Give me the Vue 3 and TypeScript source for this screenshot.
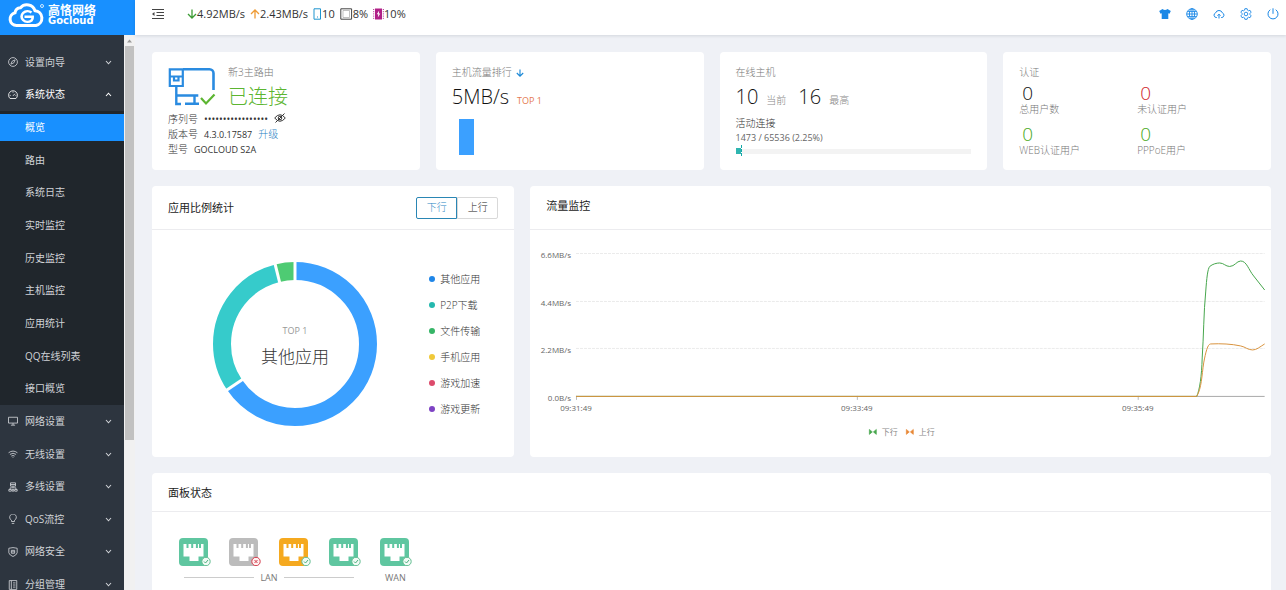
<script setup lang="ts">
import { ref } from 'vue'

interface MenuGroup {
  label: string
  icon: string
  open?: boolean
  children?: string[]
}

const groups: MenuGroup[] = [
  { label: '设置向导', icon: 'compass' },
  {
    label: '系统状态',
    icon: 'gauge',
    open: true,
    children: ['概览', '路由', '系统日志', '实时监控', '历史监控', '主机监控', '应用统计', 'QQ在线列表', '接口概览'],
  },
  { label: '网络设置', icon: 'monitor' },
  { label: '无线设置', icon: 'wifi' },
  { label: '多线设置', icon: 'lines' },
  { label: 'QoS流控', icon: 'bulb' },
  { label: '网络安全', icon: 'shield' },
  { label: '分组管理', icon: 'book' },
]

const active = ref('概览')
const direction = ref<'down' | 'up'>('down')

const auth = [
  { value: 0, label: '总用户数', tone: 'dark' },
  { value: 0, label: '未认证用户', tone: 'red' },
  { value: 0, label: 'WEB认证用户', tone: 'green' },
  { value: 0, label: 'PPPoE用户', tone: 'green' },
]

const legend = [
  { label: '其他应用', color: '#1f86e8' },
  { label: 'P2P下载', color: '#25b8ae' },
  { label: '文件传输', color: '#36b567' },
  { label: '手机应用', color: '#f0c93a' },
  { label: '游戏加速', color: '#dc4b6c' },
  { label: '游戏更新', color: '#7e43c4' },
]

const slices = [
  { start: 0, size: 236, color: '#3ba0ff' },
  { start: 236, size: 110, color: '#36cbcb' },
  { start: 346, size: 14, color: '#4ecb73' },
]

const yTicks = [
  { label: '6.6MB/s', y: 23 },
  { label: '4.4MB/s', y: 71 },
  { label: '2.2MB/s', y: 118 },
  { label: '0.0B/s', y: 166 },
]

const xTicks = [
  { label: '09:31:49', x: 47 },
  { label: '09:33:49', x: 328 },
  { label: '09:35:49', x: 609 },
]

const lan = [
  { color: '#5fc6a0', up: true },
  { color: '#bcbcbc', up: false },
  { color: '#f5a91f', up: true },
  { color: '#5fc6a0', up: true },
]
const portGroups = [
  { name: 'LAN', ports: lan, ruled: true },
  { name: 'WAN', ports: [{ color: '#5fc6a0', up: true }], ruled: false },
]

const connectionPercent = 2.25
</script>

<template>
  <div class="app">
    <aside class="side">
      <a class="brand" href="#" aria-label="高恪网络 Gocloud">
        <svg class="brand-mark" viewBox="0 0 38 26" width="38" height="26" fill="none" stroke="#fff">
          <path stroke-width="3" d="M10 23.5H8.500a6.500 6.500 0 0 1-1.500-12.800a6 6 0 0 1 5.500-5a8.500 8.500 0 0 1 14.500 3a7.500 7.500 0 0 1 1 14.800Z" />
          <path stroke-width="2.600" d="M23.500 10.500a6 5.300 0 1 0 0 8c1-1 1.300-2.500 1.200-3.700H16.500" />
          <circle cx="34" cy="4" r="1.500" stroke-width=".8" />
        </svg>
        <span class="brand-text"><b>高恪网络</b><b class="brand-en">Gocloud</b></span>
      </a>
      <div class="side-body">
        <nav class="menu">
          <template v-for="g in groups" :key="g.label">
            <button type="button" class="menu-head" :class="{ open: g.open }" :aria-expanded="!!g.open">
              <svg class="menu-icon" viewBox="0 0 12 12" width="10" height="10" fill="none" stroke="currentColor">
                <template v-if="g.icon === 'compass'">
                  <circle cx="6" cy="6" r="5.300" /><path d="M8.600 3.400L7 7L3.400 8.600L5 5Z" />
                </template>
                <template v-else-if="g.icon === 'gauge'">
                  <path d="M2.500 10.200a5.300 5.300 0 1 1 7 0Z" /><path d="M6 7l2.300-2.500M6 2v1.200M2 6.500h1.200M9 6.500h1" />
                </template>
                <template v-else-if="g.icon === 'monitor'">
                  <path d="M.6 1.500h10.800v7H.6ZM6 8.500v2.300M3.500 11h5" />
                </template>
                <template v-else-if="g.icon === 'wifi'">
                  <path d="M.7 4.500q5.300-4 10.600 0M2.300 6.500q3.700-2.800 7.400 0M4 8.500q2-1.500 4 0M5.500 10h1" />
                </template>
                <template v-else-if="g.icon === 'lines'">
                  <path d="M3 1h6v4H3ZM3 3h6M6 5v2M2.500 9V7h7v2M1 9h3v2H1ZM5 9h2v2H5ZM8 9h3v2H8Z" />
                </template>
                <template v-else-if="g.icon === 'bulb'">
                  <path d="M4.200 9V7.500a4 4 0 1 1 3.600 0V9ZM4.500 11.300h3" />
                </template>
                <template v-else-if="g.icon === 'shield'">
                  <path d="M1 1.500L6 .7l5 .8v5.500Q10 10 6 11.400Q2 10 1 7Z" /><path d="M4 4h4v3.500H4ZM4 5.800h4" />
                </template>
                <template v-else>
                  <path d="M1.500.7h9v10.600h-9ZM4 .7v10.600M6 3.500h3M6 6h3M6 8.500h3" />
                </template>
              </svg>
              <span>{{ g.label }}</span>
              <svg class="chev" viewBox="0 0 8 6" width="7" height="5" fill="none" stroke="currentColor" stroke-width="1.300">
                <path :d="g.open ? 'M1 4.800L4 1.500L7 4.800' : 'M1 1.200L4 4.500L7 1.200'" />
              </svg>
            </button>
            <ul v-if="g.children" class="sub">
              <li v-for="c in g.children" :key="c">
                <a href="#" :class="{ active: active === c }" @click.prevent="active = c">{{ c }}</a>
              </li>
            </ul>
          </template>
        </nav>
        <div class="scroll" aria-hidden="true">
          <svg viewBox="0 0 11 11" width="11" height="11"><path d="M3 7.500L5.500 4.500L8 7.500Z" fill="#999" /></svg>
          <div class="thumb"></div>
        </div>
      </div>
    </aside>

    <div class="main">
      <header class="top">
        <button type="button" class="icon-btn fold" aria-label="收起菜单">
          <svg viewBox="0 0 14 12" width="14" height="12" fill="none" stroke="#444">
            <path d="M1 1.500h12M5.500 4.500H13M5.500 7.500H13M1 10.500h12" /><path d="M3.500 4L1 6l2.500 2Z" fill="#444" stroke="none" />
          </svg>
        </button>
        <ul class="stats">
          <li>
            <svg viewBox="0 0 10 10" width="10" height="10" fill="none" stroke="#3d9c35" stroke-width="1.300"><path d="M5 .5v8.500M1 5l4 4l4-4" /></svg>4.92MB/s
          </li>
          <li>
            <svg viewBox="0 0 10 10" width="10" height="10" fill="none" stroke="#ee9b35" stroke-width="1.300"><path d="M5 9.500V1M1 5l4-4l4 4" /></svg>2.43MB/s
          </li>
          <li>
            <svg viewBox="0 0 9 12" width="9" height="12" fill="none" stroke="#1e95cf"><path d="M1 .8h6.500v10.400H1Z" /><path d="M4 9h1" /></svg>10
          </li>
          <li>
            <svg viewBox="0 0 13 12" width="13" height="12" fill="none" stroke="#444"><path d="M.8.8h10.800v10.400H.8Z" /><path d="M3 2.500h6.500v7H3Z" stroke="#999" stroke-width=".6" /></svg>8%
          </li>
          <li>
            <svg viewBox="0 0 11 12" width="11" height="12" fill="none"><path d="M2 .5h7v11H2Z" fill="#b01f87" /><path d="M.7 1v10M10.300 1v10" stroke="#b01f87" stroke-dasharray="1 1.200" /><path d="M6.200 2.500L3.800 6.300h1.500L4.800 9.500L7.300 5.600H5.800Z" fill="#fff" /></svg>10%
          </li>
        </ul>
        <div class="tools">
          <button type="button" class="icon-btn" aria-label="主题">
            <svg viewBox="0 0 12 12" width="12" height="12"><path d="M3.500 1Q6 3 8.500 1L11.800 3L10.500 5.800L9.300 5.300V11H2.700V5.300L1.500 5.800L.2 3Z" fill="#1b88e6" /></svg>
          </button>
          <button type="button" class="icon-btn" aria-label="语言">
            <svg viewBox="0 0 12 12" width="12" height="12" fill="none" stroke="#1b88e6" stroke-width=".9"><circle cx="6" cy="6" r="5.300" /><ellipse cx="6" cy="6" rx="2.600" ry="5.300" /><path d="M6 .7v10.600M.7 6h10.600M1.500 3.400h9M1.500 8.600h9" /></svg>
          </button>
          <button type="button" class="icon-btn" aria-label="云升级">
            <svg viewBox="0 0 12 12" width="12" height="12" fill="none" stroke="#1b88e6"><path d="M3.800 9.500H3A2.400 2.400 0 0 1 2.600 4.900a3.600 3.600 0 0 1 6.800 0A2.400 2.400 0 0 1 9 9.500h-.8M6 10.500V6.300M4.500 7.700L6 6.200l1.500 1.500" /></svg>
          </button>
          <button type="button" class="icon-btn" aria-label="设置">
            <svg viewBox="0 0 12 12" width="12" height="12" fill="none" stroke="#1b88e6" stroke-width=".9"><path d="M4.900.7h2.200l.4 1.500l1 .6l1.500-.5l1.100 1.900l-1.100 1.100v1.400l1.100 1.100L10 9.700l-1.500-.5l-1 .6l-.4 1.500H4.900l-.4-1.500l-1-.6l-1.500.5L.9 7.800L2 6.700V5.300L.9 4.200L2 2.300l1.500.5l1-.6Z" /><circle cx="6" cy="6" r="1.800" /></svg>
          </button>
          <button type="button" class="icon-btn" aria-label="退出">
            <svg viewBox="0 0 12 12" width="12" height="12" fill="none" stroke="#1b88e6"><path d="M6 .3v5.500M3.300 1.700a5 5 0 1 0 5.400 0" /></svg>
          </button>
        </div>
      </header>

      <main class="content">
        <section class="row four">
          <article class="card tile">
            <div class="host">
              <svg viewBox="0 0 48 40" width="48" height="40" fill="none" stroke="#2a8be0" stroke-width="2.600">
                <path d="M15 2.300h26.500a4 4 0 0 1 4 4V23" />
                <path d="M1.800 2.300H14.800V19H1.800ZM1.800 9.500h13M6 9.500v4h4.500v-4" stroke-width="2.200" />
                <path d="M8.300 19v18H13M8.300 28.500h22M17 36.800h14M26.500 28.500v8" stroke-width="2.400" />
                <path d="M33 31l5 5.500L46.500 27.500" stroke="#5cb531" stroke-width="2.200" />
              </svg>
              <div>
                <p class="muted">新3主路由</p>
                <p class="state">已连接</p>
              </div>
            </div>
            <dl class="info">
              <div>
                <dt>序列号</dt><dd class="dots">•••••••••••••••••</dd>
                <dd>
                  <button type="button" class="icon-btn" aria-label="显示序列号">
                    <svg viewBox="0 0 12 10" width="12" height="10" fill="none" stroke="#333"><path d="M.7 5Q6-1.500 11.300 5Q6 11.500.7 5ZM10.500.5l-9 9" /><circle cx="6" cy="5" r="1.800" /></svg>
                  </button>
                </dd>
              </div>
              <div><dt>版本号</dt><dd class="num">4.3.0.17587</dd><dd><a href="#" class="link">升级</a></dd></div>
              <div><dt>型号</dt><dd class="num model">GOCLOUD S2A</dd></div>
            </dl>
          </article>

          <article class="card tile">
            <h2 class="muted">主机流量排行
              <svg viewBox="0 0 10 10" width="8" height="8" fill="none" stroke="#1b88d6" stroke-width="1.400"><path d="M5 .5v8.500M1 5l4 4l4-4" /></svg>
            </h2>
            <p class="figures"><strong>5MB/s</strong><span class="top1">TOP 1</span></p>
            <div class="rank-bar"></div>
          </article>

          <article class="card tile">
            <h2 class="muted">在线主机</h2>
            <p class="figures"><strong>10</strong><span>当前</span><strong>16</strong><span>最高</span></p>
            <p class="conn">活动连接</p>
            <p class="num conn-num">1473 / 65536 (2.25%)</p>
            <div class="meter" role="progressbar" :aria-valuenow="connectionPercent">
              <div class="meter-fill" :style="{ width: connectionPercent + '%' }"></div>
              <div class="meter-mark"></div>
            </div>
          </article>

          <article class="card tile">
            <h2 class="muted">认证</h2>
            <ul class="auth">
              <li v-for="a in auth" :key="a.label">
                <strong :class="a.tone">{{ a.value }}</strong><span>{{ a.label }}</span>
              </li>
            </ul>
          </article>
        </section>

        <section class="row three">
          <article class="card">
            <header class="card-head">
              <h2>应用比例统计</h2>
              <div class="segment" role="group" aria-label="方向">
                <button type="button" :class="{ on: direction === 'down' }" @click="direction = 'down'">下行</button>
                <button type="button" :class="{ on: direction === 'up' }" @click="direction = 'up'">上行</button>
              </div>
            </header>
            <div class="share">
              <svg class="donut" viewBox="0 0 166 166" width="166" height="166">
                <g transform="rotate(-90 83 83)" fill="none" stroke-width="18">
                  <circle
                    v-for="s in slices" :key="s.start" cx="83" cy="83" r="73" :stroke="s.color" pathLength="360"
                    :stroke-dasharray="`${s.size} ${360 - s.size}`" :stroke-dashoffset="-s.start"
                  />
                </g>
                <path
                  v-for="s in slices" :key="'gap' + s.start" d="M83 0v21" stroke="#fff" stroke-width="3"
                  :transform="`rotate(${s.start} 83 83)`"
                />
                <text x="83" y="73" class="donut-small">TOP 1</text>
                <text x="83" y="102" class="donut-big">其他应用</text>
              </svg>
              <ul class="legend">
                <li v-for="l in legend" :key="l.label">
                  <svg viewBox="0 0 6 6" width="6" height="6"><circle cx="3" cy="3" r="3" :fill="l.color" /></svg>{{ l.label }}
                </li>
              </ul>
            </div>
          </article>

          <article class="card wide">
            <header class="card-head traffic"><h2>流量监控</h2></header>
            <svg class="chart" viewBox="1 0 741 226" role="img" aria-label="流量监控">
              <g v-for="t in yTicks" :key="t.label">
                <path v-if="t.y < 160" :d="`M47 ${t.y}.500H736`" stroke="#ebebeb" stroke-dasharray="3 1" />
                <text x="42" :y="t.y + 5" text-anchor="end">{{ t.label }}</text>
              </g>
              <path d="M47 166.500H736" stroke="#aaa" />
              <g v-for="t in xTicks" :key="t.label">
                <path :d="`M${t.x}.500 166v4`" stroke="#bbb" />
                <text :x="t.x" y="181" text-anchor="middle">{{ t.label }}</text>
              </g>
              <g fill="none">
                <path stroke="#46a64c" d="M47 166.500H668C671 160 673 146 673.500 128C675 106 675 82 677 62C678 48 679 39 681 36.500C684 34 688 33 691 33C695 33 697 36.500 701 36.500C706 36.500 708 31 712 31C718 31 720 40 725 46L736 60" />
                <path stroke="#d9943f" d="M47 166.500H668C673 158 673 146 675 133C677 122 679 114 682 114C692 113.500 703 114 712 116C717 117 719 120 724 120C728 120 731 117 736 114" />
              </g>
              <path d="M340.500 199.500v5l3-2.500ZM347.500 199.500v5l-3-2.500Z" fill="#46a64c" stroke="#46a64c" stroke-width=".6" />
              <text x="353" y="205" class="key">下行</text>
              <path d="M377.500 199.500v5l3-2.500ZM384.500 199.500v5l-3-2.500Z" fill="#e88836" stroke="#e88836" stroke-width=".6" />
              <text x="390" y="205" class="key">上行</text>
            </svg>
          </article>
        </section>

        <section class="card panel">
          <header class="card-head"><h2>面板状态</h2></header>
          <div class="port-groups">
            <div v-for="g in portGroups" :key="g.name">
              <div class="ports">
                <svg v-for="(p, i) in g.ports" :key="i" viewBox="0 0 32 28" width="32" height="28">
                  <rect width="29" height="28" rx="4" :fill="p.color" />
                  <path d="M4.500 6h3v4H9.500V6h2.700v4h2V6h2.700v4h2V6h2.100v4h0V6h3.500v12.500h-5v4.500H10.500v-4.500h-6Z" fill="#fff" />
                  <path d="M20 5v5h2V5Z" :fill="p.color" />
                  <circle cx="27" cy="23.500" r="4.200" :fill="p.up ? '#f1fbf5' : '#fff0f0'" :stroke="p.up ? '#62bd91' : '#d43c4c'" />
                  <path fill="none" :stroke="p.up ? '#4cae7e' : '#d43c4c'" :d="p.up ? 'M25 23.500l1.500 1.500l2.500-3' : 'M25.500 22l3 3M28.500 22l-3 3'" />
                </svg>
              </div>
              <div class="port-name" :class="{ ruled: g.ruled }">{{ g.name }}</div>
            </div>
          </div>
        </section>
      </main>
    </div>
  </div>
</template>

<style>
body {
  background: #eff1f6;
}
</style>

<style scoped>
.app {
  display: flex;
  height: 100vh;
  overflow: hidden;
  font-family: "Open Sans", "Noto Sans CJK SC", sans-serif;
  font-size: 10px;
  font-weight: 300;
  line-height: 15px;
  color: #333;
}
* {
  box-sizing: border-box;
}
h2, p, ul, dl, dd {
  margin: 0;
  padding: 0;
  font-size: inherit;
  font-weight: inherit;
}
ul {
  list-style: none;
}
a {
  text-decoration: none;
}
svg {
  display: block;
  flex: none;
}
button {
  padding: 0;
  border: 0;
  background: none;
  font: inherit;
  color: inherit;
  cursor: pointer;
}

/* sidebar */
.side {
  display: flex;
  flex-direction: column;
  flex: none;
  width: 135px;
}
.brand {
  display: flex;
  flex: none;
  gap: 2px;
  height: 35px;
  padding: 2px 8px;
  background: #1890ff;
  color: #fff;
}
.brand-text {
  display: flex;
  flex-direction: column;
  font-family: "Noto Sans CJK SC", sans-serif;
  font-size: 12px;
  line-height: 13px;
  padding-top: 1px;
}
.brand-text b {
  font-weight: 700;
}
.brand-text .brand-en {
  font-family: "DejaVu Sans", sans-serif;
  font-size: 10px;
  line-height: 10px;
}
.side-body {
  display: flex;
  flex: 1;
  min-height: 0;
  overflow: hidden;
}
.menu {
  display: flex;
  flex-direction: column;
  flex: 1;
  height: 566px;
  padding-top: 11px;
  background: #2d353f;
  color: #d0d3d7;
  font-weight: 400;
}
.menu-head {
  display: flex;
  flex: 1 1 0;
  align-items: center;
  gap: 7px;
  padding: 0 12px 0 8px;
}
.menu-head.open {
  color: #fff;
}
.chev {
  margin-left: auto;
}
.sub {
  display: grid;
  grid-auto-rows: 1fr;
  flex: 9 1 0;
  background: #20262c;
}
.sub li {
  display: flex;
  align-items: center;
}
.sub a {
  flex: 1;
  padding-left: 25px;
  line-height: 27px;
  color: #d0d3d7;
}
.sub a.active {
  background: #1890ff;
  color: #fff;
}
.scroll {
  width: 11px;
  background: #f1f1f1;
}
.thumb {
  width: 9px;
  height: 71%;
  margin-left: 1px;
  background: #c1c1c1;
}

/* top bar */
.main {
  flex: 1;
  min-width: 0;
}
.top {
  display: flex;
  align-items: center;
  height: 35px;
  padding: 0 7px 7px 16px;
  background: #fff;
  box-shadow: 0 1px 3px #0015291f;
}
.stats {
  display: flex;
  gap: 5px;
  margin-left: 22px;
  font-size: 11px;
  font-weight: 400;
  line-height: 16px;
}
.stats li {
  display: flex;
  align-items: center;
}
.tools {
  display: flex;
  gap: 15px;
  margin-left: auto;
}

/* content */
.content {
  display: flex;
  flex-direction: column;
  gap: 16px;
  padding: 17px 15px 0 17px;
}
.row {
  display: grid;
  gap: 16px;
}
.four {
  grid-template-columns: repeat(4, 1fr);
}
.three {
  grid-template-columns: repeat(3, 1fr);
}
.wide {
  grid-column: span 2;
}
.card {
  min-width: 0;
  border-radius: 4px;
  background: #fff;
}
.tile {
  min-height: 118px;
  padding: 13px 16px 8px;
}
.muted {
  color: #777;
}
h2.muted {
  display: flex;
  align-items: center;
  gap: 4px;
}
.host {
  display: flex;
  gap: 12px;
  height: 47px;
}
.host svg {
  margin-top: 2px;
}
.state {
  font-size: 20px;
  line-height: 33px;
  color: #5cb531;
}
.info div {
  display: flex;
  align-items: center;
  gap: 6px;
}
.num {
  font-size: 9px;
  font-weight: 400;
}
.dots {
  font-weight: 400;
}
.link {
  color: #1f7fc4;
}
.figures {
  display: flex;
  align-items: baseline;
  gap: 8px;
  height: 36px;
  line-height: 34px;
  color: #888;
}
.figures strong {
  font-size: 20px;
  font-weight: 300;
  color: #111;
}
.figures span + strong {
  margin-left: 4px;
}
.figures .top1 {
  font-size: 9px;
  font-weight: 400;
  color: #e57a52;
}
.rank-bar {
  width: 15px;
  height: 36px;
  margin: 3px 0 0 7px;
  background: #3ba0ff;
}
.conn-num {
  line-height: 14px;
  color: #666;
}
.meter {
  display: flex;
  align-items: center;
  height: 12px;
  background: linear-gradient(#f3f3f3, #f3f3f3) center / 100% 5px no-repeat;
}
.meter-fill {
  height: 6px;
  background: #2fb5b0;
}
.meter-mark {
  width: 1px;
  height: 12px;
  background: repeating-linear-gradient(#13a8a8 0 3px, #fff 3px 4px);
}
.auth {
  display: grid;
  grid-template-columns: 1fr 1fr;
  color: #777;
}
.auth li {
  display: flex;
  flex-direction: column;
  height: 41px;
  padding-top: 4px;
}
.auth strong {
  padding-left: 3px;
  font-size: 19px;
  font-weight: 300;
  line-height: 18px;
}
.dark { color: #111; }
.red { color: #d0242c; }
.green { color: #49a81c; }

.card-head {
  display: flex;
  align-items: center;
  justify-content: space-between;
  min-height: 44px;
  padding: 0 16px;
  border-bottom: 1px solid #ececef;
  font-size: 11px;
  font-weight: 400;
  color: #222;
}
.traffic {
  padding-bottom: 4px;
}
.segment {
  display: flex;
  font-size: 10px;
  font-weight: 300;
}
.segment button {
  width: 41px;
  height: 22px;
  border: 1px solid #d9d9d9;
  border-radius: 0 2px 2px 0;
}
.segment button:first-child {
  border-radius: 2px 0 0 2px;
}
.segment button.on {
  border-color: #2a86b4;
  color: #2a86c4;
}
.share {
  display: flex;
  align-items: center;
  justify-content: center;
  gap: 51px;
  padding: 0 35px 0 61px;
  height: 227px;
}
.legend {
  line-height: 26px;
  white-space: nowrap;
}
.legend li {
  display: flex;
  align-items: center;
  gap: 5px;
}
.donut text {
  text-anchor: middle;
}
.donut-small {
  font-size: 9px;
  font-weight: 400;
  fill: #999;
}
.donut-big {
  font-size: 17px;
  fill: #333;
}
.chart {
  width: 100%;
  height: auto;
}
.chart text {
  font-size: 8px;
  font-weight: 400;
  fill: #666;
}
.chart .key {
  fill: #888;
}
.panel {
  min-height: 160px;
}
.panel .card-head {
  min-height: 39px;
}
.port-groups {
  display: flex;
  gap: 19px;
  padding: 26px 27px;
}
.ports {
  display: flex;
  gap: 18px;
}
.port-name {
  display: flex;
  align-items: center;
  justify-content: center;
  gap: 6px;
  padding: 0 7px 0 5px;
  margin-top: 4px;
  font-size: 9px;
  font-weight: 400;
  color: #777;
}
.ruled::before,
.ruled::after {
  content: "";
  flex: 1;
  height: 1px;
  background: #ccc;
}
</style>
